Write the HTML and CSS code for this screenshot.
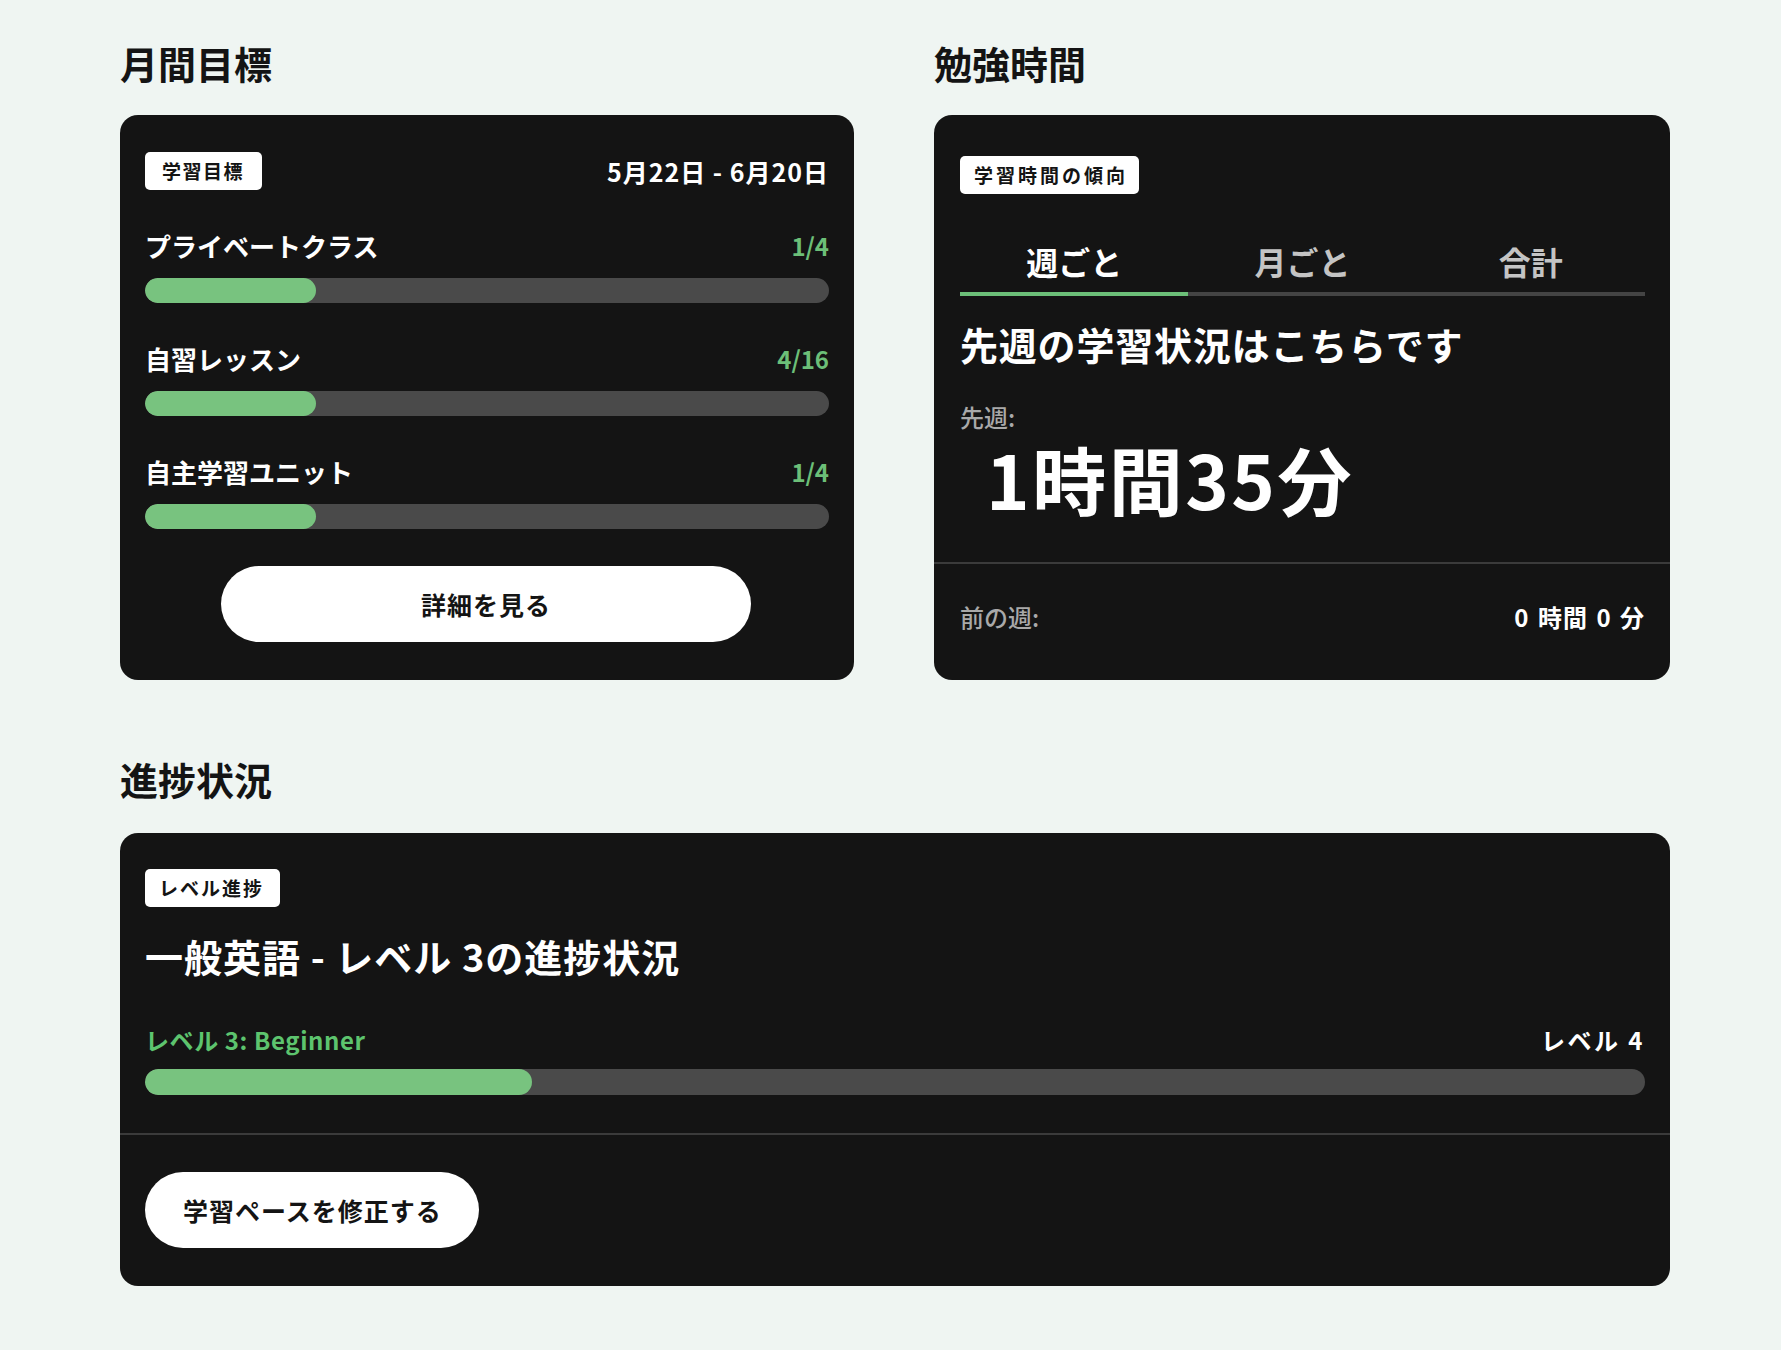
FILE: index.html
```html
<!DOCTYPE html>
<html lang="ja">
<head>
<meta charset="utf-8">
<title>学習ダッシュボード</title>
<link rel="stylesheet" href="styles.css">
</head>
<body>
<main class="page">
  <div class="top-grid">
    <section class="col">
      <h2 class="section-title">月間目標</h2>
      <div class="card goals">
        <div class="goals-head">
          <span class="badge badge-goal">学習目標</span>
          <span class="date-range">5月22日 - 6月20日</span>
        </div>
        <div class="goal">
          <div class="goal-row"><span class="goal-label">プライベートクラス</span><span class="goal-count">1/4</span></div>
          <div class="bar"><div class="bar-fill" style="width:25%"></div></div>
        </div>
        <div class="goal">
          <div class="goal-row"><span class="goal-label">自習レッスン</span><span class="goal-count">4/16</span></div>
          <div class="bar"><div class="bar-fill" style="width:25%"></div></div>
        </div>
        <div class="goal">
          <div class="goal-row"><span class="goal-label">自主学習ユニット</span><span class="goal-count">1/4</span></div>
          <div class="bar"><div class="bar-fill" style="width:25%"></div></div>
        </div>
        <div class="btn-wrap"><button class="btn btn-wide">詳細を見る</button></div>
      </div>
    </section>
    <section class="col">
      <h2 class="section-title">勉強時間</h2>
      <div class="card study">
        <div class="study-main">
          <span class="badge badge-trend">学習時間の傾向</span>
          <div class="tabs">
            <div class="tab active">週ごと</div>
            <div class="tab">月ごと</div>
            <div class="tab">合計</div>
          </div>
          <h3 class="card-title study-title">先週の学習状況はこちらです</h3>
          <div class="muted-label last-week">先週:</div>
          <div class="big-time">1時間35分</div>
        </div>
        <div class="study-foot">
          <span class="muted-label">前の週:</span>
          <span class="prev-time">0 時間 0 分</span>
        </div>
      </div>
    </section>
  </div>

  <section class="progress-section">
    <h2 class="section-title">進捗状況</h2>
    <div class="card level">
      <div class="level-main">
        <span class="badge badge-level">レベル進捗</span>
        <h3 class="card-title level-title">一般英語 - レベル 3の進捗状況</h3>
        <div class="level-row">
          <span class="level-current">レベル 3: Beginner</span>
          <span class="level-next">レベル 4</span>
        </div>
        <div class="bar bar-level"><div class="bar-fill" style="width:25.8%"></div></div>
      </div>
      <div class="level-foot">
        <button class="btn btn-pace">学習ペースを修正する</button>
      </div>
    </div>
  </section>
</main>
</body>
</html>
```

FILE: styles.css
```css
* { box-sizing: border-box; }

html, body {
  margin: 0;
  padding: 0;
}

body {
  background: #eff5f2;
  font-family: "Noto Sans CJK JP", "Noto Sans", "Liberation Sans", sans-serif;
  color: #111;
  min-height: 1350px;
}

.page {
  width: 1550px;
  margin-left: 120px;
  padding-top: 40px;
}

.top-grid {
  display: grid;
  grid-template-columns: 734px 736px;
  column-gap: 80px;
}

.section-title {
  margin: 0 0 29px 0;
  font-size: 38px;
  line-height: 46px;
  font-weight: 700;
  color: #141414;
}

.card {
  background: #141414;
  border-radius: 18px;
  color: #fff;
}

.badge {
  display: inline-block;
  height: 38px;
  line-height: 38px;
  padding: 0 14px;
  background: #fff;
  color: #141414;
  border-radius: 5px;
  font-size: 19px;
  font-weight: 700;
}

.badge-goal { letter-spacing: 1.5px; padding: 0 18px 0 17px; }
.badge-trend { letter-spacing: 3px; padding-right: 11px; }
.badge-level { letter-spacing: 2px; padding-right: 16px; }

/* goals card */
.goals {
  height: 565px;
  padding: 37px 25px 37px 25px;
  display: flex;
  flex-direction: column;
}

.goals-head {
  display: flex;
  justify-content: space-between;
  align-items: center;
  height: 38px;
}

.date-range {
  font-size: 25px;
  font-weight: 700;
  letter-spacing: 1px;
}

.goal { margin-top: 38px; }
.goal + .goal { margin-top: 38px; }

.goal-row {
  display: flex;
  justify-content: space-between;
  align-items: center;
  height: 34px;
  margin-bottom: 16px;
}

.goal-label {
  font-size: 26px;
  font-weight: 700;
}

.goal-count {
  font-size: 24px;
  font-weight: 700;
  color: #6cbf78;
}

.bar {
  height: 25px;
  border-radius: 13px;
  background: #4a4a4a;
  overflow: hidden;
}

.bar-fill {
  height: 100%;
  border-radius: 13px;
  background: #78c37f;
}

.btn-wrap {
  display: flex;
  justify-content: center;
  margin-top: 37px;
  padding-right: 2px;
}

.btn {
  height: 76px;
  border: none;
  border-radius: 38px;
  background: #fff;
  color: #141414;
  font-family: inherit;
  font-size: 25px;
  font-weight: 700;
  letter-spacing: 1px;
}

.btn-wide { width: 530px; }
.btn-pace { padding: 0 37px 0 38px; letter-spacing: 1px; }

/* study card */
.study {
  height: 565px;
  display: flex;
  flex-direction: column;
}

.study-main {
  padding: 41px 25px 44.5px 26px;
  border-bottom: 2px solid #3b3b3b;
}

.tabs {
  display: grid;
  grid-template-columns: repeat(3, 1fr);
  margin-top: 47px;
  border-bottom: 4px solid #444;
}

.tab {
  text-align: center;
  font-size: 32px;
  line-height: 40px;
  font-weight: 700;
  color: #c4c4c4;
  padding-bottom: 11px;
  margin-bottom: -4px;
  border-bottom: 4px solid transparent;
}

.tab.active {
  color: #fff;
  border-bottom-color: #6cbf78;
}

.card-title {
  margin: 0;
  font-size: 38px;
  line-height: 46px;
  font-weight: 700;
  color: #fff;
}

.study-title { margin-top: 25px; letter-spacing: 0.8px; }

.muted-label {
  font-size: 24px;
  line-height: 30px;
  color: #a9a9a9;
  font-weight: 500;
}

.last-week { margin-top: 34.5px; }

.big-time {
  margin-top: 6px;
  margin-left: 26px;
  font-size: 74px;
  line-height: 80px;
  font-weight: 700;
  letter-spacing: 2.5px;
}

.study-foot {
  display: flex;
  justify-content: space-between;
  align-items: center;
  padding: 38px 25px 44px 26px;
}

.prev-time {
  font-size: 24px;
  font-weight: 700;
  line-height: 30px;
  letter-spacing: 1px;
  word-spacing: 2px;
}

/* level card */
.progress-section { margin-top: 76px; }

.progress-section .section-title { margin-bottom: 31px; }

.level {
  height: 453px;
}

.level-main {
  padding: 36px 25px 38px 25px;
  border-bottom: 2px solid #3b3b3b;
}

.level-title { margin-top: 25.5px; letter-spacing: 1px; }

.level-row {
  display: flex;
  justify-content: space-between;
  align-items: center;
  margin-top: 46px;
  height: 30px;
  font-weight: 700;
}

.level-current { color: #5dc46e; font-size: 24px; letter-spacing: 0.6px; }
.level-next { color: #fff; font-size: 24px; letter-spacing: 2.5px; }

.bar-level {
  margin-top: 14.5px;
  height: 26px;
}

.level-foot {
  padding: 37px 25px 38px 25px;
}
```
